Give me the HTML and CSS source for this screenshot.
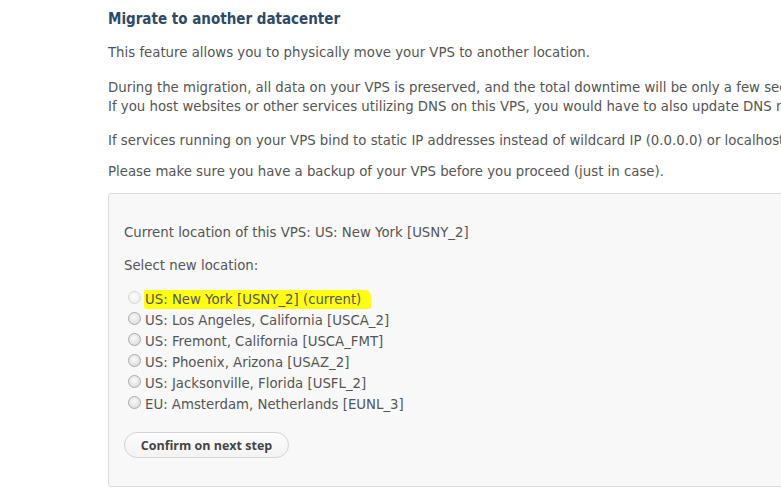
FILE: index.html
```html
<!DOCTYPE html>
<html>
<head>
<meta charset="utf-8">
<link rel="stylesheet" href="styles.css">
</head>
<body>
<div class="page">
  <h2 class="title">Migrate to another datacenter</h2>
  <p>This feature allows you to physically move your VPS to another location.</p>
  <p class="two">During the migration, all data on your VPS is preserved, and the total downtime will be only a few seconds.<br>If you host websites or other services utilizing DNS on this VPS, you would have to also update DNS records.</p>
  <p>If services running on your VPS bind to static IP addresses instead of wildcard IP (0.0.0.0) or localhost, they will need reconfiguration.</p>
  <p class="last">Please make sure you have a backup of your VPS before you proceed (just in case).</p>
  <div class="panel">
    <p>Current location of this VPS: US: New York [USNY_2]</p>
    <p>Select new location:</p>
    <div class="options">
      <label class="opt"><span class="radio disabled"></span><span class="hl">US: New York [USNY_2] (current)</span></label>
      <label class="opt"><span class="radio"></span>US: Los Angeles, California [USCA_2]</label>
      <label class="opt"><span class="radio"></span>US: Fremont, California [USCA_FMT]</label>
      <label class="opt"><span class="radio"></span>US: Phoenix, Arizona [USAZ_2]</label>
      <label class="opt"><span class="radio"></span>US: Jacksonville, Florida [USFL_2]</label>
      <label class="opt"><span class="radio"></span>EU: Amsterdam, Netherlands [EUNL_3]</label>
    </div>
    <button class="btn">Confirm on next step</button>
  </div>
</div>
</body>
</html>
```
FILE: styles.css
```css
html, body {
  margin: 0;
  padding: 0;
  background: #fff;
  overflow: hidden;
}
.page {
  padding: 9px 0 0 108px;
  width: 1200px;
  font-family: "DejaVu Sans", Verdana, sans-serif;
  font-size: 13.3px;
  color: #555;
  line-height: 19px;
}
.title {
  margin: 0 0 13px;
  font-family: "DejaVu Sans Condensed", "DejaVu Sans", sans-serif;
  font-stretch: condensed;
  font-size: 15px;
  line-height: 21px;
  font-weight: bold;
  color: #2d4a66;
}
p {
  margin: 0 0 16px;
  white-space: nowrap;
}
p.two {
  margin-bottom: 15px;
}
p.last {
  margin-top: -4px;
  margin-bottom: 12px;
}
.panel {
  border: 1px solid #dcdcdc;
  border-radius: 3px;
  background: #f8f8f8;
  padding: 29px 15px 0;
  height: 263px;
}
.panel p {
  margin-bottom: 14px;
}
.options {
  display: flex;
  flex-direction: column;
  margin-top: 14px;
}
.opt {
  display: flex;
  align-items: center;
  height: 21px;
  white-space: nowrap;
}
.radio {
  width: 13px;
  height: 13px;
  border-radius: 50%;
  border: 1px solid #aaa;
  background: radial-gradient(circle at 45% 40%, #fafafa 0%, #e6e6e6 55%, #cfcfcf 100%);
  margin: 0 4px 0 4px;
  box-sizing: border-box;
  flex: none;
  position: relative;
  top: -2px;
}
.radio.disabled {
  border-color: #d6d6d6;
  background: radial-gradient(circle at 45% 40%, #fcfcfc 0%, #f0f0f0 70%, #e6e6e6 100%);
}
.hl {
  background: #ffff14;
  padding: 0 10px 0 1px;
  margin-left: -1px;
  border-radius: 2px 6px 2px 3px;
}
.btn {
  display: block;
  margin-top: 17px;
  height: 26px;
  padding: 0;
  border: 1px solid #d3d3d3;
  border-radius: 13px;
  background: linear-gradient(#fcfcfc, #f3f3f3);
  font-family: "Open Sans", sans-serif;
  font-weight: bold;
  font-size: 12.5px;
  color: #444;
  width: 165px;
}
```
